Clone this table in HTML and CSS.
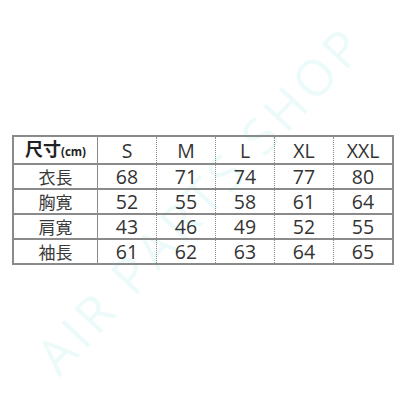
FILE: index.html
```html
<!DOCTYPE html>
<html lang="ja">
<head>
<meta charset="utf-8">
<link rel="stylesheet" href="styles.css">
</head>
<body>
<div class="page">
  <div class="watermark">AIR PARTS SHOP</div>
  <table class="size-table">
    <tr class="head">
      <th class="label"><span class="jp-b">尺寸</span><span class="unit">(cm)</span></th>
      <th>S</th><th>M</th><th>L</th><th>XL</th><th>XXL</th>
    </tr>
    <tr><td class="label">衣長</td><td>68</td><td>71</td><td>74</td><td>77</td><td>80</td></tr>
    <tr><td class="label">胸寛</td><td>52</td><td>55</td><td>58</td><td>61</td><td>64</td></tr>
    <tr><td class="label">肩寛</td><td>43</td><td>46</td><td>49</td><td>52</td><td>55</td></tr>
    <tr><td class="label">袖長</td><td>61</td><td>62</td><td>63</td><td>64</td><td>65</td></tr>
  </table>
</div>
</body>
</html>
```

FILE: styles.css
```css
html, body {
  margin: 0;
  padding: 0;
  background: #ffffff;
}
.page {
  position: relative;
  width: 400px;
  height: 400px;
  overflow: hidden;
  padding-top: 135px;
  padding-left: 12px;
  box-sizing: border-box;
}
.watermark {
  position: absolute;
  left: -40px;
  top: 165px;
  width: 480px;
  text-align: center;
  transform: rotate(-47deg);
  font-family: "Open Sans", "DejaVu Sans", sans-serif;
  font-weight: 400;
  font-size: 50px;
  letter-spacing: 5px;
  color: #ecfafa;
  white-space: nowrap;
}
.size-table {
  position: relative;
  border-collapse: collapse;
  border: 2px solid #8a8a8a;
  font-family: "Open Sans", "Noto Sans CJK JP", sans-serif;
  color: #333333;
  table-layout: fixed;
  width: 374px;
}
.size-table th,
.size-table td {
  height: 23px;
  padding: 0;
  text-align: center;
  vertical-align: middle;
  font-size: 19.5px;
  font-weight: 400;
  line-height: 23px;
  border-top: 2px solid #8a8a8a;
  border-bottom: 2px solid #8a8a8a;
  border-left: 1px dotted #8a8a8a;
  border-right: 1px dotted #8a8a8a;
  width: 58px;
}
.size-table .head th {
  height: 24px;
}
.size-table .label {
  width: 83px;
  border-right: 1.5px solid #8a8a8a;
  font-family: "Noto Sans CJK JP", sans-serif;
  font-size: 17px;
  color: #3a3a3a;
}
.jp-b {
  font-family: "Noto Sans CJK JP", sans-serif;
  font-weight: 700;
  font-size: 18px;
  color: #222222;
}
.unit {
  font-family: "Open Sans", sans-serif;
  font-weight: 700;
  font-size: 11.5px;
  color: #222222;
}
```
